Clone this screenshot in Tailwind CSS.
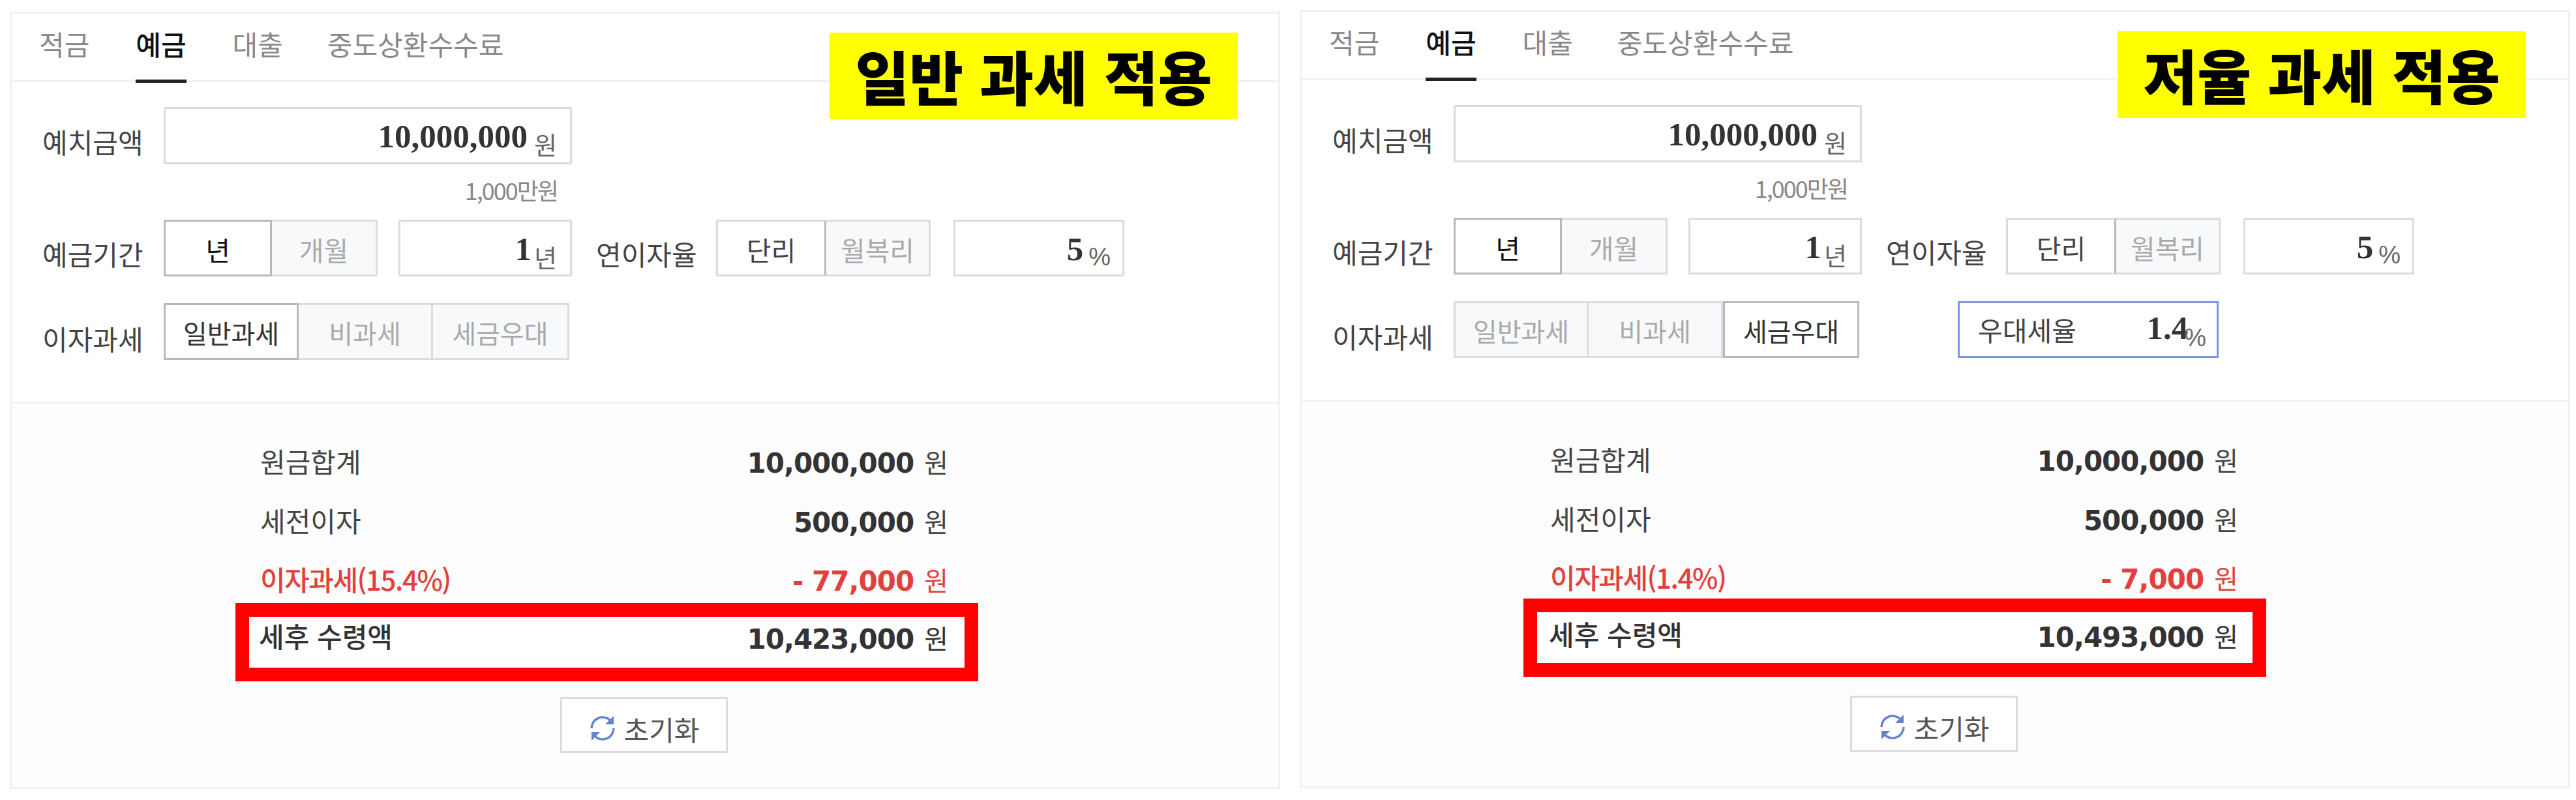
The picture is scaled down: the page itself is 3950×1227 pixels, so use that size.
<!DOCTYPE html>
<html lang="ko">
<head>
<meta charset="UTF-8">
<title>예금 계산기</title>
<script src="https://cdn.jsdelivr.net/npm/@tailwindcss/browser@4"></script>
</head>
<body class="bg-white font-['Noto_Sans_CJK_KR','Noto_Sans',sans-serif] text-[#444] w-[3950px] h-[1227px] overflow-hidden">
<div class="flex items-start pl-[15px]">

  <!-- 일반 과세 -->
  <section class="relative w-[1948px] h-[1192px] mt-[18px] border-[3px] border-[#f1f1f3] flex flex-col shrink-0">
    <nav class="flex h-[105px] border-b-[3px] border-[#f2f2f4] pl-[42px] gap-[71px] text-[42px] text-[#888] shrink-0">
      <a class="h-[105px] pt-[18px] leading-[56px]">적금</a>
      <a class="h-[106px] pt-[18px] leading-[56px] text-[#111] font-medium border-b-[5px] border-[#222]">예금</a>
      <a class="h-[105px] pt-[18px] leading-[56px]">대출</a>
      <a class="h-[105px] pt-[18px] leading-[56px] ml-[-3px]">중도상환수수료</a>
    </nav>
    <div class="absolute left-[1254px] top-[29px] w-[626px] h-[133px] bg-[#ffff00] text-black font-black text-[90px] leading-[130px] text-center whitespace-pre">일반 과세 적용</div>

    <div class="h-[490px] pl-[47px] pt-[38px] text-[42px] shrink-0">
      <div class="flex items-start">
        <span class="w-[186px] pt-[23px] leading-[60px]">예치금액</span>
        <div class="w-[626px] h-[88px] border-[3px] border-[#dcdce0] flex justify-end items-start pr-[20px] bg-white">
          <b class="font-['Liberation_Serif',serif] text-[51px] leading-[64px] mt-[10px] text-[#333]">10,000,000</b>
          <span class="text-[38px] leading-[50px] mt-[29px] ml-[10px] text-[#666]">원</span>
        </div>
      </div>
      <p class="w-[812px] text-right pr-[22px] text-[36px] leading-[48px] mt-[15px] text-[#888] tracking-[-2px]">1,000만원</p>
      <div class="flex items-start mt-[22px]">
        <span class="w-[186px] pt-[22px] leading-[60px]">예금기간</span>
        <div class="flex h-[87px] w-[328px] text-center text-[41px]">
          <span class="w-[166px] border-[3px] border-[#b9b9bd] text-[#111] leading-[85px]">년</span>
          <span class="flex-1 border-[3px] border-l-0 border-[#dcdce0] bg-[#f8f9fb] text-[#aaa] leading-[85px]">개월</span>
        </div>
        <div class="ml-[32px] w-[266px] h-[87px] border-[3px] border-[#dcdce0] flex justify-end items-start pr-[20px]">
          <b class="font-['Liberation_Serif',serif] text-[51px] leading-[64px] mt-[10px] text-[#333]">1</b>
          <span class="text-[38px] leading-[50px] mt-[29px] ml-[4px] text-[#666]">년</span>
        </div>
        <span class="ml-[37px] w-[184px] pt-[22px] leading-[60px]">연이자율</span>
        <div class="flex h-[87px] w-[329px] text-center text-[41px]">
          <span class="w-[169px] border-[3px] border-[#dcdce0] border-r-[#b9b9bd] leading-[85px]">단리</span>
          <span class="flex-1 border-[3px] border-l-0 border-[#dcdce0] bg-[#f8f9fb] text-[#aaa] leading-[85px]">월복리</span>
        </div>
        <div class="ml-[35px] w-[262px] h-[87px] border-[3px] border-[#dcdce0] flex justify-end items-start pr-[18px]">
          <b class="font-['Liberation_Serif',serif] text-[51px] leading-[64px] mt-[10px] text-[#333]">5</b>
          <span class="font-['Liberation_Sans',sans-serif] text-[38px] leading-[50px] mt-[29px] ml-[8px] text-[#666]">%</span>
        </div>
      </div>
      <div class="flex items-start mt-[41px]">
        <span class="w-[186px] pt-[24px] leading-[60px]">이자과세</span>
        <div class="flex h-[87px] w-[622px] text-center text-[40px]">
          <span class="w-[207px] border-[3px] border-[#b9b9bd] text-[#333] leading-[85px]">일반과세</span>
          <span class="w-[206px] border-[3px] border-l-0 border-[#dcdce0] bg-[#f8f9fb] text-[#aaa] leading-[85px]">비과세</span>
          <span class="flex-1 border-[3px] border-l-0 border-[#dcdce0] bg-[#f8f9fb] text-[#aaa] leading-[85px]">세금우대</span>
        </div>
      </div>
    </div>

    <div class="flex-1 border-t-[3px] border-[#f2f2f4] bg-[#fdfdfd] pt-[58px] text-[42px]">
      <div class="ml-[381px] w-[1055px]">
        <div class="flex justify-between h-[91px] leading-[60px]"><span>원금합계</span><span><b class="font-['DejaVu_Sans',sans-serif] text-[42px] tracking-[-1px] text-[#333]">10,000,000</b><span class="text-[40px] ml-[16px]">원</span></span></div>
        <div class="flex justify-between h-[90px] leading-[60px]"><span>세전이자</span><span><b class="font-['DejaVu_Sans',sans-serif] text-[42px] tracking-[-1px] text-[#333]">500,000</b><span class="text-[40px] ml-[16px]">원</span></span></div>
        <div class="flex justify-between h-[60px] leading-[60px] text-[#e2403c]"><span class="font-medium tracking-[-1.5px]">이자과세(15.4%)</span><span><b class="font-['DejaVu_Sans',sans-serif] text-[42px] tracking-[-1px]">- 77,000</b><span class="text-[40px] ml-[16px]">원</span></span></div>
      </div>
      <div class="ml-[343px] w-[1139px] h-[120px] mt-[7px] border-[21px] border-[#ff0000] bg-white pl-[15px] pr-[25px] flex justify-between text-[#333] leading-[60px]">
        <span class="font-medium mt-[-1px]">세후 수령액</span><span class="mt-[1px]"><b class="font-['DejaVu_Sans',sans-serif] text-[42px] tracking-[-1px]">10,423,000</b><span class="text-[40px] ml-[16px]">원</span></span>
      </div>
      <button class="flex items-center justify-center ml-[841px] mt-[24px] pt-[10px] w-[257px] h-[86px] border-[3px] border-[#dcdce0] bg-white text-[42px] text-[#555]">
        <svg class="w-[42px] h-[42px] mr-[12px]" viewBox="0 0 42 42" fill="none" stroke="#6583cf" stroke-width="3.5"><path d="M4 21a17 17 0 0 1 29-12"/><path d="M38 21a17 17 0 0 1-29 12"/><path d="M38 2v13H25z" stroke="none" fill="#6583cf"/><path d="M4 40V27h13z" stroke="none" fill="#6583cf"/></svg>초기화
      </button>
    </div>
  </section>

  <!-- 저율 과세 -->
  <section class="relative w-[1948px] h-[1194px] mt-[15px] ml-[30px] border-[3px] border-[#f1f1f3] flex flex-col shrink-0">
    <nav class="flex h-[105px] border-b-[3px] border-[#f2f2f4] pl-[42px] gap-[71px] text-[42px] text-[#888] shrink-0">
      <a class="h-[105px] pt-[18px] leading-[56px]">적금</a>
      <a class="h-[106px] pt-[18px] leading-[56px] text-[#111] font-medium border-b-[5px] border-[#222]">예금</a>
      <a class="h-[105px] pt-[18px] leading-[56px]">대출</a>
      <a class="h-[105px] pt-[18px] leading-[56px] ml-[-3px]">중도상환수수료</a>
    </nav>
    <div class="absolute left-[1251px] top-[30px] w-[626px] h-[133px] bg-[#ffff00] text-black font-black text-[90px] leading-[130px] text-center whitespace-pre">저율 과세 적용</div>

    <div class="h-[490px] pl-[47px] pt-[38px] text-[42px] shrink-0">
      <div class="flex items-start">
        <span class="w-[186px] pt-[23px] leading-[60px]">예치금액</span>
        <div class="w-[626px] h-[88px] border-[3px] border-[#dcdce0] flex justify-end items-start pr-[20px] bg-white">
          <b class="font-['Liberation_Serif',serif] text-[51px] leading-[64px] mt-[10px] text-[#333]">10,000,000</b>
          <span class="text-[38px] leading-[50px] mt-[29px] ml-[10px] text-[#666]">원</span>
        </div>
      </div>
      <p class="w-[812px] text-right pr-[22px] text-[36px] leading-[48px] mt-[15px] text-[#888] tracking-[-2px]">1,000만원</p>
      <div class="flex items-start mt-[22px]">
        <span class="w-[186px] pt-[22px] leading-[60px]">예금기간</span>
        <div class="flex h-[87px] w-[328px] text-center text-[41px]">
          <span class="w-[166px] border-[3px] border-[#b9b9bd] text-[#111] leading-[85px]">년</span>
          <span class="flex-1 border-[3px] border-l-0 border-[#dcdce0] bg-[#f8f9fb] text-[#aaa] leading-[85px]">개월</span>
        </div>
        <div class="ml-[32px] w-[266px] h-[87px] border-[3px] border-[#dcdce0] flex justify-end items-start pr-[20px]">
          <b class="font-['Liberation_Serif',serif] text-[51px] leading-[64px] mt-[10px] text-[#333]">1</b>
          <span class="text-[38px] leading-[50px] mt-[29px] ml-[4px] text-[#666]">년</span>
        </div>
        <span class="ml-[37px] w-[184px] pt-[22px] leading-[60px]">연이자율</span>
        <div class="flex h-[87px] w-[329px] text-center text-[41px]">
          <span class="w-[169px] border-[3px] border-[#dcdce0] border-r-[#b9b9bd] leading-[85px]">단리</span>
          <span class="flex-1 border-[3px] border-l-0 border-[#dcdce0] bg-[#f8f9fb] text-[#aaa] leading-[85px]">월복리</span>
        </div>
        <div class="ml-[35px] w-[262px] h-[87px] border-[3px] border-[#dcdce0] flex justify-end items-start pr-[18px]">
          <b class="font-['Liberation_Serif',serif] text-[51px] leading-[64px] mt-[10px] text-[#333]">5</b>
          <span class="font-['Liberation_Sans',sans-serif] text-[38px] leading-[50px] mt-[29px] ml-[8px] text-[#666]">%</span>
        </div>
      </div>
      <div class="flex items-start mt-[41px]">
        <span class="w-[186px] pt-[24px] leading-[60px]">이자과세</span>
        <div class="flex h-[87px] w-[622px] text-center text-[40px]">
          <span class="w-[207px] border-[3px] border-[#dcdce0] bg-[#f8f9fb] text-[#aaa] leading-[85px]">일반과세</span>
          <span class="w-[206px] border-[3px] border-l-0 border-[#dcdce0] bg-[#f8f9fb] text-[#aaa] leading-[85px]">비과세</span>
          <span class="flex-1 border-[3px] border-[#b9b9bd] bg-white text-[#333] leading-[85px]">세금우대</span>
        </div>
        <div class="ml-[151px] w-[400px] h-[87px] border-[3px] border-[#7c93e6] flex items-start pl-[28px] pr-[16px]">
          <span class="text-[41px] leading-[80px]">우대세율</span>
          <b class="font-['Liberation_Serif',serif] text-[51px] leading-[64px] mt-[6px] ml-auto text-[#333]">1.4</b>
          <span class="font-['Liberation_Sans',sans-serif] text-[38px] leading-[50px] mt-[28px] ml-[-6px] text-[#666]">%</span>
        </div>
      </div>
    </div>

    <div class="flex-1 border-t-[3px] border-[#f2f2f4] bg-[#fdfdfd] pt-[58px] text-[42px]">
      <div class="ml-[381px] w-[1055px]">
        <div class="flex justify-between h-[91px] leading-[60px]"><span>원금합계</span><span><b class="font-['DejaVu_Sans',sans-serif] text-[42px] tracking-[-1px] text-[#333]">10,000,000</b><span class="text-[40px] ml-[16px]">원</span></span></div>
        <div class="flex justify-between h-[90px] leading-[60px]"><span>세전이자</span><span><b class="font-['DejaVu_Sans',sans-serif] text-[42px] tracking-[-1px] text-[#333]">500,000</b><span class="text-[40px] ml-[16px]">원</span></span></div>
        <div class="flex justify-between h-[60px] leading-[60px] text-[#e2403c]"><span class="font-medium tracking-[-1.5px]">이자과세(1.4%)</span><span><b class="font-['DejaVu_Sans',sans-serif] text-[42px] tracking-[-1px]">- 7,000</b><span class="text-[40px] ml-[16px]">원</span></span></div>
      </div>
      <div class="ml-[340px] w-[1139px] h-[120px] mt-[3px] border-[21px] border-[#ff0000] bg-white pl-[18px] pr-[22px] flex justify-between text-[#333] leading-[60px]">
        <span class="font-medium mt-[3px]">세후 수령액</span><span class="mt-[5px]"><b class="font-['DejaVu_Sans',sans-serif] text-[42px] tracking-[-1px]">10,493,000</b><span class="text-[40px] ml-[16px]">원</span></span>
      </div>
      <button class="flex items-center justify-center ml-[841px] mt-[29px] pt-[10px] w-[257px] h-[86px] border-[3px] border-[#dcdce0] bg-white text-[42px] text-[#555]">
        <svg class="w-[42px] h-[42px] mr-[12px]" viewBox="0 0 42 42" fill="none" stroke="#6583cf" stroke-width="3.5"><path d="M4 21a17 17 0 0 1 29-12"/><path d="M38 21a17 17 0 0 1-29 12"/><path d="M38 2v13H25z" stroke="none" fill="#6583cf"/><path d="M4 40V27h13z" stroke="none" fill="#6583cf"/></svg>초기화
      </button>
    </div>
  </section>
</div>
</body>
</html>
